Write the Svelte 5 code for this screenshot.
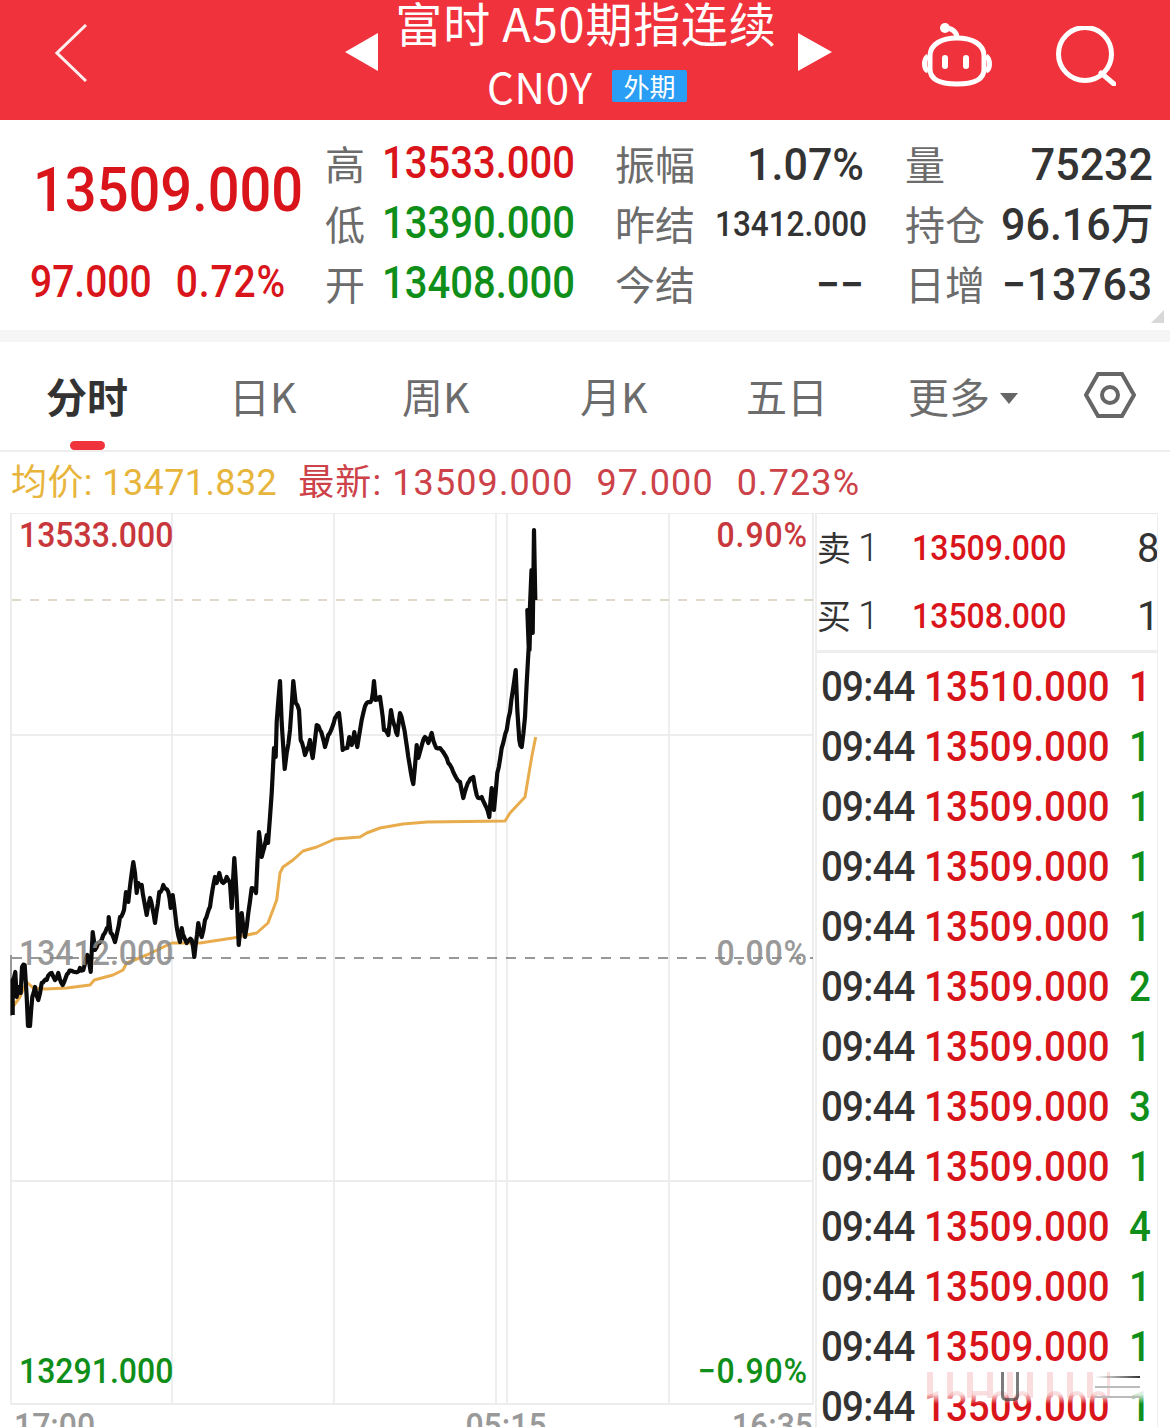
<script>
  const stats = [
    { label: '高', value: '13533.000', cls: 'up' },
    { label: '振幅', value: '1.07%', cls: 'right mid' },
    { label: '量', value: '75232', cls: 'right' },
    { label: '低', value: '13390.000', cls: 'down' },
    { label: '昨结', value: '13412.000', cls: 'right mid small' },
    { label: '持仓', value: '96.16万', cls: 'right' },
    { label: '开', value: '13408.000', cls: 'down' },
    { label: '今结', value: '−−', cls: 'right mid' },
    { label: '日增', value: '−13763', cls: 'right wide' }
  ];

  const tabs = ['分时', '日K', '周K', '月K', '五日'];

  const trades = [
    ['13510.000', 1, 'up'],
    ['13509.000', 1, 'down'],
    ['13509.000', 1, 'down'],
    ['13509.000', 1, 'down'],
    ['13509.000', 1, 'down'],
    ['13509.000', 2, 'down'],
    ['13509.000', 1, 'down'],
    ['13509.000', 3, 'down'],
    ['13509.000', 1, 'down'],
    ['13509.000', 4, 'down'],
    ['13509.000', 1, 'down'],
    ['13509.000', 1, 'down'],
    ['13509.000', 1, 'down']
  ];

  // traced from the reference, page coordinates
  const price = `12.7,1015 12.7,980 15.3,972 16.7,997 18.3,987 20.7,993 22,967 24.7,965 26.7,997 28,1026 30,1026 32.3,997 35,987 38.3,1000 41.7,983 46.7,980 51.7,973 55,980 58.3,973 62.7,985 68.3,973 75,972 80,968 83.3,970 87.3,955 90.7,972 92.7,932 95,950 98.3,943 103.3,935 108.3,927 108.7,917 110.7,933 115,942 120,917 124,910 126,892 128.3,902 133.3,862 135,873 136.7,893 138.3,883 141.7,885 146.7,915 150,898 155,923 159.3,892 163.3,885 168.3,892 170.7,908 172.7,895 176.7,927 180,942 181.7,928 186.7,943 191.7,940 194.3,957 198.3,923 201.7,937 205,920 210,907 215,877 216.7,883 219.3,873 223.3,883 226.7,877 230,883 231.7,908 234.3,858 236.7,897 238.7,945 241.7,913 245,937 248.3,913 251.7,888 256,893 259,832 261.7,857 266.7,835 268,843 270,817 271.7,793 274,748 275.7,757 276.7,722 280,681 281.7,723 284.7,769 286.7,753 290,730 293.3,681 295.7,703 299,710 300.7,740 305,755 310,740 312.7,758 316.7,725 320,730 325,747 328.3,735 335,718 339,713 342.7,750 347.3,748 349.3,737 351.7,745 354.3,732 357.3,747 363.3,713 366.7,703 371.7,700 374,681 375.7,700 380,697 384,730 388.3,735 391,710 395,727 397.3,735 400,713 403.3,725 408.3,757 413.3,784 416.7,745 418.3,758 425,737 428.3,743 431.7,733 435,745 440,748 448.3,763 451.7,768 460,782 463.3,798 469.3,781 473.3,777 476.7,795 481.7,797 489.3,817 491.7,788 494,810 497.3,773 501.7,748 506.7,730 510,712 515.7,670 517.3,710 519.3,740 521.7,747 525,717 526.7,683 528.7,647 527.3,610 529.5,650 531,590 528.5,640 531.5,570 532.7,633 534,530 535.3,600`;

  const avg = `12.7,1007 20,997 26.7,982 33.3,988 45,989 66.7,988 90,985 94.3,980 113,975 123,970 126.7,963 146.7,955 171.7,943 200,943 233,938 256.7,933 268,923 276.7,900 280,873 283,867 293,860 303,851 316.7,847 335,839 360,837 366.7,833 380,828 403,824 427,822 505,821 510,813 525,797 531.7,757 535.7,737`;

  const gridX = [172, 334, 496, 507, 669];

  // the real tick line is noisy, so shake the traced points a little
  const rough = (points) => {
    const pts = points.split(' ').map((p) => p.split(',').map(Number));
    const out = [];
    let n = 0;
    for (let i = 0; i < pts.length - 1; i++) {
      const [x1, y1] = pts[i];
      const [x2, y2] = pts[i + 1];
      const steps = Math.max(1, Math.round(Math.abs(x2 - x1) / 1.4));
      for (let s = 0; s < steps; s++) {
        const t = s / steps;
        const wobble = s === 0 ? 0 : Math.sin(n * 12.9898) * 2.2;
        out.push(`${(x1 + (x2 - x1) * t).toFixed(1)},${(y1 + (y2 - y1) * t + wobble).toFixed(1)}`);
        n++;
      }
    }
    out.push(pts[pts.length - 1].join(','));
    return out.join(' ');
  };

  const priceLine = rough(price);
</script>

<div class="page">
  <header class="top">
    <svg class="back" viewBox="0 0 32 58" width="32" height="58">
      <path d="M31 1 L2 29 L31 57" />
    </svg>
    <svg class="arrow-l" viewBox="0 0 33 38" width="33" height="38">
      <path d="M33 0 V38 L0 19 Z" />
    </svg>
    <div class="title">
      <div class="name">富时 A50期指连续</div>
      <div class="code">
        <span>CN0Y</span>
        <em>外期</em>
      </div>
    </div>
    <svg class="arrow-r" viewBox="0 0 34 38" width="34" height="38">
      <path d="M0 0 V38 L34 19 Z" />
    </svg>
    <svg class="bot" viewBox="0 0 70 66" width="70" height="66">
      <path class="line" d="M23 6 C30 6 35 10 35 16" />
      <circle cx="23" cy="6" r="5" fill="#fff" />
      <path class="line" d="M8 34 C8 22 20 16 35 16 C50 16 62 22 62 34 V47 C62 57 52 62 35 62 C18 62 8 57 8 47 Z" />
      <path class="line" d="M6 34 C3 36 2.5 40 2.5 42 C2.5 45 3.5 48 6 49 M64 34 C67 36 67.5 40 67.5 42 C67.5 45 66.5 48 64 49" />
      <rect x="20" y="33" width="6" height="14" rx="3" fill="#fff" />
      <rect x="41" y="33" width="6" height="14" rx="3" fill="#fff" />
    </svg>
    <svg class="search" viewBox="0 0 60 60" width="60" height="60">
      <circle cx="29" cy="28" r="26.5" />
      <path d="M45 47 L58 58" />
    </svg>
  </header>

  <section class="quote">
    <div class="last">
      <div class="big">13509.000</div>
      <div class="change">
        <span>97.000</span>
        <span>0.72%</span>
      </div>
    </div>
    <div class="stats">
      {#each stats as s}
        <span class="label">{s.label}</span>
        <span class="val {s.cls}">{s.value}</span>
      {/each}
    </div>
    <i class="corner"></i>
  </section>

  <div class="band"></div>

  <nav class="tabs">
    {#each tabs as t, i}
      <div class="tab" class:active={i === 0}>{t}</div>
    {/each}
    <div class="tab more">更多<i></i></div>
    <svg class="gear" viewBox="0 0 52 46" width="52" height="46">
      <path d="M2 23 L14 2 H38 L50 23 L38 44 H14 Z" />
      <circle cx="26" cy="23" r="8" />
    </svg>
  </nav>

  <div class="legend">
    <span class="gold">均价: 13471.832</span>
    <span>最新: 13509.000</span>
    <span>97.000</span>
    <span>0.723%</span>
  </div>

  <main class="body">
    <svg class="chart" viewBox="10 513 805 914" width="805" height="914">
      <path class="grid" d="M11 513 V1404 M813 513 V1404 M11 513 H813 M11 735 H813 M11 1181 H813 M11 1404 H813" />
      {#each gridX as x}
        <line class="grid" x1={x} x2={x} y1="513" y2="1404" />
      {/each}
      <line class="tick" x1="11" x2="11" y1="955" y2="1016" />
      <line class="dash-high" x1="12" x2="813" y1="600" y2="600" />
      <line class="dash-mid" x1="12" x2="813" y1="958" y2="958" />
      <polyline class="avg" points={avg} />
      <polyline class="price" points={priceLine} />

      <text class="axis red" x="19" y="546">13533.000</text>
      <text class="axis pct red" x="808" y="546" text-anchor="end">0.90%</text>
      <text class="axis grey" x="19" y="964">13412.000</text>
      <text class="axis pct grey" x="808" y="964" text-anchor="end">0.00%</text>
      <text class="axis green" x="19" y="1382">13291.000</text>
      <text class="axis pct green" x="808" y="1382" text-anchor="end">−0.90%</text>
      <text class="axis time" x="14" y="1437">17:00</text>
      <text class="axis time" x="506" y="1437" text-anchor="middle">05:15</text>
      <text class="axis time" x="813" y="1437" text-anchor="end">16:35</text>
    </svg>

    <aside class="side">
      <div class="book">
        <div class="level">
          <span class="side-name">卖<b>1</b></span>
          <span class="book-price">13509.000</span>
          <span class="book-vol">8</span>
        </div>
        <div class="level">
          <span class="side-name">买<b>1</b></span>
          <span class="book-price">13508.000</span>
          <span class="book-vol">1</span>
        </div>
      </div>
      <ul class="trades">
        {#each trades as [p, vol, dir]}
          <li>
            <span class="t">09:44</span>
            <span class="p">{p}</span>
            <span class="v {dir}">{vol}</span>
          </li>
        {/each}
      </ul>
      <div class="smudge"><i></i><b></b></div>
    </aside>
  </main>
</div>

<style>
  :global(body) {
    margin: 0;
    background: #fff;
  }

  .page {
    position: relative;
    width: 1170px;
    height: 1427px;
    overflow: hidden;
    font-family: Roboto, "Noto Sans CJK SC", sans-serif;
    color: #333;
  }

  .top {
    display: flex;
    align-items: center;
    height: 120px;
    padding-left: 55px;
    background: #ef323c;
    box-sizing: border-box;
  }

  .back {
    margin: -14px 0 0;
    flex: none;
  }

  .back path {
    fill: none;
    stroke: #fff;
    stroke-width: 3;
    opacity: 0.92;
  }

  .arrow-l {
    margin: -16px 0 0 258px;
    flex: none;
  }

  .arrow-r {
    margin: -16px 0 0 20px;
    flex: none;
  }

  .arrow-l path,
  .arrow-r path {
    fill: #fff;
  }

  .title {
    width: 384px;
    margin-left: 16px;
    height: 120px;
    color: #fff;
    flex: none;
  }

  .name {
    font: 47px/44px "Noto Sans CJK SC", sans-serif;
    letter-spacing: 0.8px;
    white-space: nowrap;
    text-align: center;
  }

  .code {
    display: flex;
    align-items: center;
    margin: 20px 0 0 93px;
    height: 44px;
    font: 42px/44px "Noto Sans CJK SC", sans-serif;
  }

  .code span {
    width: 125px;
    letter-spacing: 0.8px;
    flex: none;
  }

  .code em {
    width: 75px;
    height: 32px;
    border-radius: 2px;
    background: #2a9df4;
    font: normal 26px/32px "Noto Sans CJK SC", sans-serif;
    text-align: center;
  }

  .bot {
    margin: -11px 0 0 90px;
    flex: none;
  }

  .bot .line {
    fill: none;
    stroke: #fff;
    stroke-width: 5;
  }

  .search {
    margin: -8px 0 0 64px;
    flex: none;
  }

  .search circle,
  .search path {
    fill: none;
    stroke: #fff;
    stroke-width: 5;
    stroke-linecap: round;
  }

  .quote {
    position: relative;
    display: flex;
    height: 210px;
  }

  .last {
    width: 325px;
    flex: none;
  }

  .big {
    margin: 38px 0 0 33px;
    font-size: 56px;
    line-height: 64px;
    font-weight: 500;
    color: #d9141a;
    transform: scaleY(1.1);
  }

  .change {
    display: flex;
    gap: 24px;
    margin: 36px 0 0 30px;
    font-size: 39px;
    line-height: 48px;
    font-weight: 500;
    color: #d9141a;
    transform: scaleY(1.12);
  }

  .change span:last-child {
    letter-spacing: 0.9px;
  }

  .stats {
    display: grid;
    grid-template-columns: 58px 232px 100px 190px 96px 152px;
    grid-auto-rows: 60px;
    margin-top: 13px;
    align-items: center;
  }

  .label {
    font: 40px/60px "Noto Sans CJK SC", sans-serif;
    color: #6c6c6c;
    white-space: nowrap;
  }

  .val {
    font-size: 43px;
    line-height: 60px;
    font-weight: 500;
    white-space: nowrap;
    color: #333;
    transform: translateY(1px) scaleY(1.04);
  }

  .val.up,
  .val.down {
    margin-left: -1px;
    font-size: 40px;
    transform: scaleY(1.12);
  }

  .val.up {
    color: #d9141a;
  }

  .val.down {
    color: #0f8f1a;
  }

  .val.right {
    text-align: right;
  }

  .val.mid {
    padding-right: 41px;
  }

  .val.small {
    font-size: 31.5px;
    transform: translateY(2px) scaleY(1.12);
  }

  .val.wide {
    letter-spacing: 0.8px;
  }

  .corner {
    position: absolute;
    right: 6px;
    bottom: 7px;
    width: 0;
    height: 0;
    border-left: 13px solid transparent;
    border-bottom: 13px solid #d8d8d8;
  }

  .band {
    height: 12px;
    background: #f5f5f5;
  }

  .tabs {
    position: relative;
    display: grid;
    grid-template-columns: 183px 173px 178px 166px 162px 177px 52px;
    align-items: center;
    height: 110px;
    padding-left: 46px;
    border-bottom: 2px solid #eee;
    box-sizing: border-box;
    font: 41px/1 "Noto Sans CJK SC", sans-serif;
    color: #6c6c6c;
  }

  .tab {
    margin-top: -2px;
    white-space: nowrap;
  }

  .tab.active {
    color: #333;
    font-weight: 700;
  }

  .tab.active::after {
    content: "";
    position: absolute;
    left: 70px;
    bottom: 0;
    width: 35px;
    height: 9px;
    border-radius: 5px;
    background: #ef323c;
  }

  .more i {
    display: inline-block;
    margin: 0 0 9px 10px;
    border-left: 9px solid transparent;
    border-right: 9px solid transparent;
    border-top: 11px solid #666;
  }

  .gear {
    margin: -2px 0 0 -1px;
  }

  .gear path,
  .gear circle {
    fill: none;
    stroke: #666;
    stroke-width: 4;
  }

  .legend {
    display: flex;
    gap: 23px;
    align-items: center;
    height: 61px;
    padding-left: 11px;
    box-sizing: border-box;
    font: 36px/1 Roboto, "Noto Sans CJK SC", sans-serif;
    color: #cc4248;
    white-space: nowrap;
    letter-spacing: 1.1px;
  }

  .gold {
    margin-right: -2px;
    color: #e8b53c;
    letter-spacing: 0.4px;
  }

  .body {
    display: flex;
    padding-left: 10px;
    height: 914px;
  }

  .chart {
    display: block;
    flex: none;
  }

  .grid {
    fill: none;
    stroke: #e8e8e8;
    stroke-width: 1.5;
  }

  .tick {
    stroke: #999;
    stroke-width: 2;
  }

  .dash-high {
    stroke: #d6cdb8;
    stroke-width: 1.5;
    stroke-dasharray: 9 9;
  }

  .dash-mid {
    stroke: #777;
    stroke-width: 1.5;
    stroke-dasharray: 10 9;
  }

  .avg {
    fill: none;
    stroke: #e8ac4c;
    stroke-width: 3;
    stroke-linejoin: round;
  }

  .price {
    fill: none;
    stroke: #0b0b0b;
    stroke-width: 4.2;
    stroke-linejoin: round;
  }

  .axis {
    font-family: Roboto, sans-serif;
    font-size: 32px;
    font-weight: 500;
    transform-box: fill-box;
    transform-origin: center;
    transform: scaleY(1.1);
  }

  .pct {
    letter-spacing: 0.9px;
  }

  .red {
    fill: #c8373c;
  }

  .grey {
    fill: #888;
    opacity: 0.85;
  }

  .green {
    fill: #0f8f1a;
  }

  .time {
    fill: #999;
  }

  .side {
    position: relative;
    width: 343px;
    height: 914px;
    box-sizing: border-box;
    border-left: 2px solid #eee;
    border-right: 1px solid #eee;
    border-top: 1px solid #e8e8e8;
    flex: none;
    overflow: hidden;
  }

  .book {
    height: 136px;
    border-bottom: 3px solid #eee;
  }

  .level {
    display: flex;
    align-items: center;
    height: 68px;
  }

  .side-name {
    width: 95px;
    flex: none;
    font: 34px/1 "Noto Sans CJK SC", sans-serif;
    color: #333;
    white-space: nowrap;
  }

  .side-name b {
    margin-left: 7px;
    font: 300 38px/1 Roboto, sans-serif;
  }

  .book-price {
    width: 225px;
    flex: none;
    font-size: 32px;
    font-weight: 500;
    color: #d9141a;
    transform: scaleY(1.12);
  }

  .book-vol {
    font-size: 40px;
    width: 21px;
    text-align: right;
    color: #333;
    flex: none;
  }

  .trades {
    margin: 0;
    padding: 3px 0 0 4px;
    list-style: none;
  }

  .trades li {
    display: flex;
    align-items: center;
    height: 60px;
    font-size: 38.5px;
    font-weight: 500;
  }

  .trades span {
    transform: scaleY(1.1);
  }

  .t {
    width: 103px;
    color: #333;
    letter-spacing: -0.8px;
    flex: none;
  }

  .p {
    width: 202px;
    color: #d9141a;
    flex: none;
  }

  .v {
    width: 25px;
    text-align: right;
    flex: none;
  }

  .v.up {
    color: #d9141a;
  }

  .v.down {
    color: #0f8f1a;
  }

  .smudge {
    position: absolute;
    left: 108px;
    top: 858px;
    width: 230px;
    height: 32px;
    background: linear-gradient(to bottom, #fff 0%, rgba(255, 255, 255, 0.85) 70%, rgba(255, 255, 255, 0) 100%);
  }

  .smudge::before {
    content: "";
    position: absolute;
    left: 2px;
    top: 0;
    width: 183px;
    height: 26px;
    background: repeating-linear-gradient(90deg, rgba(217, 20, 26, 0.14) 0 6px, transparent 6px 20px);
  }

  .smudge i {
    position: absolute;
    left: 76px;
    top: 0;
    width: 12px;
    height: 26px;
    border: solid #444;
    border-width: 0 3px 3px 3px;
    border-radius: 0 0 5px 5px;
    opacity: 0.7;
  }

  .smudge b {
    position: absolute;
    left: 170px;
    top: 4px;
    width: 45px;
    height: 2px;
    background: linear-gradient(to right, transparent, #333);
    box-shadow: 0 10px 0 #bbb, 0 20px 0 #bbb;
  }
</style>
